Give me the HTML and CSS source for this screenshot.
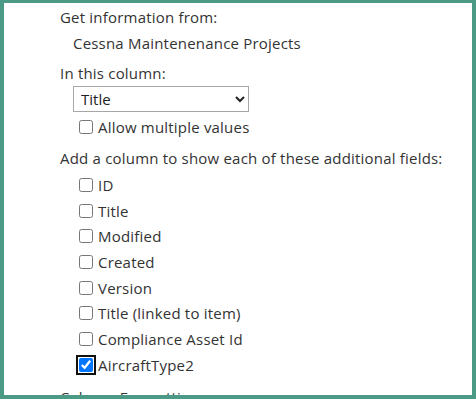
FILE: index.html
```html
<!DOCTYPE html>
<html lang="en">
<head>
  <meta charset="UTF-8">
  <title>Lookup column settings</title>
  <link rel="stylesheet" href="styles.css">
</head>
<body>

  <div class="frame">
    <div class="label first">Get information from:</div>
    <div class="value">Cessna Maintenenance Projects</div>

    <div class="label gap">In this column:</div>
    <select class="picker">
      <option>Title</option>
    </select>
    <label class="check first-check"><input type="checkbox"> Allow multiple values</label>

    <div class="label gap-md">Add a column to show each of these additional fields:</div>
    <div class="fields">
      <label class="check"><input type="checkbox"> ID</label>
      <label class="check"><input type="checkbox"> Title</label>
      <label class="check"><input type="checkbox"> Modified</label>
      <label class="check"><input type="checkbox"> Created</label>
      <label class="check"><input type="checkbox"> Version</label>
      <label class="check"><input type="checkbox"> Title (linked to item)</label>
      <label class="check"><input type="checkbox"> Compliance Asset Id</label>
      <label class="check"><input type="checkbox" class="focused" checked> AircraftType2</label>
    </div>

    <div class="label gap-lg">Column Formatting</div>
  </div>

</body>
</html>
```

FILE: styles.css
```css
body {
  margin: 0;
  padding: 0;
  font-family: "Segoe UI", "Open Sans", sans-serif;
  font-size: 15px;
  letter-spacing: 0.2px;
  color: #333;
  background: #4a9a85;
  overflow: hidden;
}

.frame {
  box-sizing: border-box;
  height: 399px;
  border: 4px solid #4a9a85;
  border-top-width: 3px;
  background: #fff;
  padding: 1px 0 0 56px;
  overflow: hidden;
  display: flex;
  flex-direction: column;
  align-items: flex-start;
}

.label, .value {
  line-height: 26px;
  white-space: nowrap;
}

.value {
  padding-left: 13px;
}

.gap {
  margin-top: 4px;
}

.gap-md {
  margin-top: 5px;
}

.gap-lg {
  margin-top: 6px;
}

.picker {
  box-sizing: border-box;
  flex: none;
  margin-left: 13px;
  width: 176px;
  height: 26px;
  font-family: inherit;
  font-size: 15px;
  color: #222;
  border: 1px solid #a6a6a6;
  border-radius: 0;
  background: #fff;
  padding: 0 3px;
}

.fields {
  display: flex;
  flex-direction: column;
  margin-top: 1px;
}

.check {
  display: flex;
  align-items: center;
  flex: none;
  height: 25.7px;
  padding-left: 19px;
  white-space: nowrap;
}

.first-check {
  margin-top: 2px;
  height: 26px;
}

.check input {
  width: 14px;
  height: 14px;
  margin: 0 5px 0 0;
}

.check input.focused {
  outline: 2px solid #101010;
  outline-offset: 1px;
  border-radius: 3px;
}
```
